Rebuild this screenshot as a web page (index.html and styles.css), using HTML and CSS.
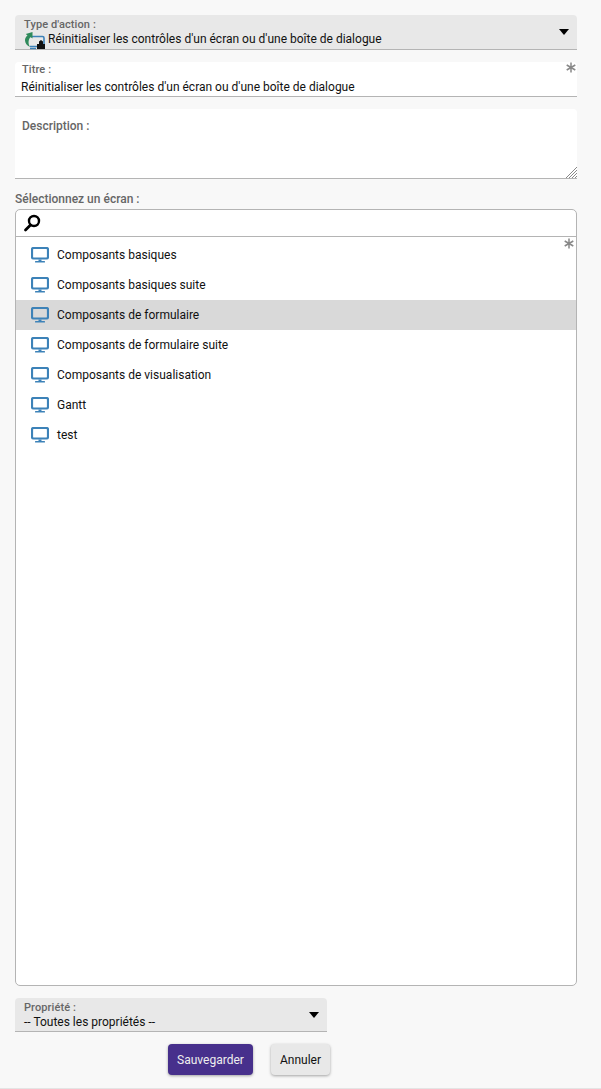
FILE: index.html
```html
<!DOCTYPE html>
<html>
  <head>
    <title>Action</title>
    <link rel="stylesheet" href="styles.css">
  </head>
  <body>
    <svg width="0" height="0" class="defs">
      <symbol id="screen" viewBox="0 0 18 16">
        <rect x="1" y="1" width="16" height="10.5" rx="1.5" fill="none" stroke="#3d82b8" stroke-width="2.200"/>
        <path d="M7.5 12.5h3v1.5h-3z" fill="#3d82b8"/>
        <rect x="4" y="14" width="10" height="1.6" rx=".6" fill="#3d82b8"/>
      </symbol>
      <symbol id="star" viewBox="0 0 10 11">
        <path d="M5 .5v10M.7 3l8.600 5M.7 8l8.600-5" stroke="#888" stroke-width="1.500"/>
      </symbol>
    </svg>
    <div class="page">
      <div class="field select">
        <div class="lbl">Type d'action :</div>
        <div class="val type-val">
          <svg class="type-icon" width="24" height="20" viewBox="0 0 24 20">
            <path d="M6 6.500h12.500a1.500 1.500 0 0 1 1.500 1.500v7a1.500 1.500 0 0 1-1.500 1.500H6" fill="none" stroke="#3d82b8" stroke-width="1.600"/>
            <path d="M6 18.500h6" stroke="#3d82b8" stroke-width="1.400"/>
            <path d="M6 17C1 15-1 9 3.500 5.500L1.800 4 8.500 2v6.500L6.500 7C4 10 4 14 6 17z" fill="#2f8a5b"/>
            <path d="M13 14h8v5h-8zM15 11.500l2-1.500 2 1.500V14h-4z" fill="#111"/>
          </svg>
          Réinitialiser les contrôles d'un écran ou d'une boîte de dialogue
        </div>
        <span class="caret"></span>
      </div>

      <div class="field title">
        <div class="lbl">Titre :</div>
        <div class="val">Réinitialiser les contrôles d'un écran ou d'une boîte de dialogue</div>
        <svg class="star"><use href="#star"/></svg>
      </div>

      <div class="field desc">
        <div class="lbl">Description :</div>
        <svg class="grip" width="12" height="12" viewBox="0 0 12 12">
          <path d="M1 12L12 1M4 12l8-8M7 12l5-5M10 12l2-2" stroke="#888" stroke-width="1"/>
        </svg>
      </div>

      <div class="sel-label">Sélectionnez un écran :</div>
      <div class="list-box">
        <div class="search">
          <svg width="18" height="18" viewBox="0 0 18 18">
            <circle cx="11" cy="7" r="5" fill="none" stroke="#000" stroke-width="2.400"/>
            <path d="M7.500 11l-5 5" stroke="#000" stroke-width="2.800" stroke-linecap="round"/>
          </svg>
        </div>
        <svg class="star list-star"><use href="#star"/></svg>
        <ul class="items">
          <li><svg class="ico"><use href="#screen"/></svg>Composants basiques</li>
          <li><svg class="ico"><use href="#screen"/></svg>Composants basiques suite</li>
          <li class="active"><svg class="ico"><use href="#screen"/></svg>Composants de formulaire</li>
          <li><svg class="ico"><use href="#screen"/></svg>Composants de formulaire suite</li>
          <li><svg class="ico"><use href="#screen"/></svg>Composants de visualisation</li>
          <li><svg class="ico"><use href="#screen"/></svg>Gantt</li>
          <li><svg class="ico"><use href="#screen"/></svg>test</li>
        </ul>
      </div>

      <div class="field select prop">
        <div class="lbl">Propriété :</div>
        <div class="val">-- Toutes les propriétés --</div>
        <span class="caret"></span>
      </div>

      <div class="buttons">
        <button class="btn save">Sauvegarder</button>
        <button class="btn cancel">Annuler</button>
      </div>
    </div>
  </body>
</html>
```

FILE: styles.css
```css
html, body {
  margin: 0;
  height: 100%;
}
body {
  background-color: #f8f8f8;
  font-family: Roboto, sans-serif;
  font-size: 12px;
  color: #111;
  overflow: hidden;
}
.defs {
  display: block;
  height: 0;
}
.page {
  box-sizing: border-box;
  height: 1089px;
  padding: 15px 24px 0 15px;
  border-bottom: 1px solid #e4e4e4;
}
.field {
  position: relative;
  box-sizing: border-box;
  border-bottom: 1px solid #b4b4b4;
  border-radius: 4px 4px 0 0;
}
.lbl {
  font-size: 11px;
  line-height: 13px;
  color: #666;
  font-weight: 500;
  letter-spacing: .1px;
}
.val {
  line-height: 15px;
}
.select {
  height: 35px;
  background-color: #e8e8e8;
  padding: 3px 9px 0;
}
.type-val {
  display: flex;
  align-items: center;
}
.type-icon {
  margin: -1px 0 -2px 0;
  flex: none;
}
.caret {
  position: absolute;
  right: 8px;
  top: 14px;
  border-left: 5px solid transparent;
  border-right: 5px solid transparent;
  border-top: 6px solid #000;
}
.title {
  height: 35px;
  margin-top: 12px;
  background-color: #fff;
  padding: 1px 6px 0;
}
.title .lbl {
  padding-left: 1px;
}
.title .val {
  margin-top: 4px;
}
.star {
  position: absolute;
  right: 1px;
  top: 0;
  width: 10px;
  height: 11px;
}
.desc {
  height: 70px;
  margin-top: 12px;
  background-color: #fff;
  padding: 10px 7px 0;
}
.desc .lbl {
  font-size: 12px;
  line-height: 14px;
  letter-spacing: 0;
}
.grip {
  position: absolute;
  right: 0;
  bottom: 0;
}
.sel-label {
  margin-top: 13px;
  font-weight: 500;
  color: #666;
  line-height: 14px;
}
.list-box {
  position: relative;
  box-sizing: border-box;
  height: 777px;
  margin-top: 3px;
  background-color: #fff;
  border: 1px solid #b4b4b4;
  border-radius: 5px;
}
.search {
  box-sizing: border-box;
  height: 27px;
  padding: 4px 0 0 7px;
  border-bottom: 1px solid #b4b4b4;
}
.list-star {
  top: 28px;
  right: 2px;
}
.items {
  list-style: none;
  margin: 3px 0 0;
  padding: 0;
}
.items li {
  display: flex;
  align-items: center;
  height: 30px;
  padding-left: 15px;
}
.items li.active {
  background-color: #d9d9d9;
}
.ico {
  width: 18px;
  height: 16px;
  margin-right: 8px;
  flex: none;
}
.prop {
  width: 312px;
  height: 34px;
  margin-top: 12px;
}
.prop .val {
  margin-top: 1px;
}
.buttons {
  display: flex;
  gap: 18px;
  margin-top: 12px;
  padding-left: 153px;
}
.btn {
  height: 31px;
  border: 0;
  border-radius: 4px;
  font-family: Roboto, sans-serif;
  font-size: 12px;
  box-shadow: 0 1px 3px rgba(0, 0, 0, .35);
}
.save {
  width: 85px;
  background-color: #47308c;
  color: #eee;
}
.cancel {
  width: 59px;
  background-color: #e8e8e8;
  color: #111;
}
```
